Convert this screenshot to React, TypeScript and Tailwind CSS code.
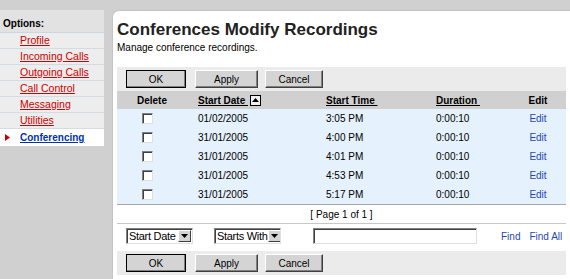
import React from 'react';

const font = "font-['Liberation_Sans',Arial,sans-serif]";

const navItems = ['Profile', 'Incoming Calls', 'Outgoing Calls', 'Call Control', 'Messaging', 'Utilities'];

const rows = [
    { date: '01/02/2005', time: '3:05 PM', duration: '0:00:10' },
    { date: '31/01/2005', time: '4:00 PM', duration: '0:00:10' },
    { date: '31/01/2005', time: '4:01 PM', duration: '0:00:10' },
    { date: '31/01/2005', time: '4:53 PM', duration: '0:00:10' },
    { date: '31/01/2005', time: '5:17 PM', duration: '0:00:10' },
];

const Btn = ({ label, width, primary }: { label: string; width: string; primary?: boolean }) => (
    <div
        className={`${width} h-[18px] flex items-center justify-center text-[10px] text-black bg-[#d4d4d4] border ${
            primary ? 'border-black' : 'border-t-white border-l-white border-r-[#404040] border-b-[#404040]'
        } shadow-[inset_-1px_-1px_0_#808080]`}
    >
        {label}
    </div>
);

const Toolbar = () => (
    <div className="h-[24px] bg-[#ebebeb] flex items-center pl-[9px]">
        <Btn label="OK" width="w-[60px]" primary />
        <div className="ml-[9px]">
            <Btn label="Apply" width="w-[63px]" />
        </div>
        <div className="ml-[7px]">
            <Btn label="Cancel" width="w-[58px]" />
        </div>
    </div>
);

const Checkbox = () => (
    <div className="w-[11px] h-[11px] bg-white border border-t-[#808080] border-l-[#808080] border-r-[#e0e0e0] border-b-[#e0e0e0] shadow-[inset_1px_1px_0_#404040]" />
);

const Select = ({ label }: { label: string }) => (
    <div className="w-[67px] h-[16px] bg-white border border-t-[#808080] border-l-[#808080] border-r-[#e0e0e0] border-b-[#e0e0e0] shadow-[inset_1px_1px_0_#404040] flex items-center justify-between pl-[2px] pr-[1px] overflow-hidden">
        <span className="text-[11px] tracking-[-0.3px] text-black leading-none whitespace-nowrap">{label}</span>
        <div className="shrink-0 w-[13px] h-[12px] bg-[#d4d4d4] border border-t-white border-l-white border-r-[#404040] border-b-[#404040] flex items-center justify-center">
            <svg width="7" height="4" viewBox="0 0 7 4">
                <path d="M0 0h7L3.5 4z" fill="#000" />
            </svg>
        </div>
    </div>
);

export default function App() {
    return (
        <div className={`${font} w-[570px] h-[279px] bg-[#d0d0d0] flex pt-[10px] overflow-hidden`}>
            {/* sidebar */}
            <div className="w-[104px] flex flex-col self-start">
                <div className="h-[23px] bg-[#e2e2e2] flex items-end pb-[3px] pl-[3px] text-[10px] leading-none font-bold text-black border-b border-[#c9d6e3]">
                    Options:
                </div>
                {navItems.map((item) => (
                    <div key={item} className="h-[16px] bg-[#ededed] border-b border-[#d4dbe3] flex items-center pl-[20px]">
                        <span className="text-[10.5px] text-[#cc0000] underline decoration-[#cc0000]">{item}</span>
                    </div>
                ))}
                <div className="h-[17px] bg-white flex items-center pl-[5px]">
                    <svg width="5" height="7" viewBox="0 0 5 7" className="mr-[10px]">
                        <path d="M0 0l5 3.5L0 7z" fill="#cc0000" />
                    </svg>
                    <span className="text-[10px] font-bold text-[#0033aa] underline">Conferencing</span>
                </div>
            </div>

            {/* main panel */}
            <div className="ml-[8px] flex-1 bg-white rounded-tl-[7px] border-l border-t border-[#c4c4c4] pl-[4px] pr-[4px] pt-[9px]">
                <h1 className="text-[17px] leading-[20px] font-bold text-[#222]">Conferences Modify Recordings</h1>
                <p className="text-[10px] leading-[12px] text-black mt-[2px]">Manage conference recordings.</p>

                <div className="mt-[13px]">
                    <Toolbar />
                </div>

                <div className="grid grid-cols-[70px_139px_110px_1fr_56px] text-[10px] text-black">
                    <div className="h-[18px] bg-[#d0d0d0] flex items-center justify-center font-bold">Delete</div>
                    <div className="h-[18px] bg-[#d0d0d0] flex items-center pl-[11px] font-bold">
                        <span className="underline">Start Date&nbsp;</span>
                        <div className="w-[11px] h-[11px] bg-[#f0f0f0] border border-black flex items-center justify-center ml-[2px]">
                            <svg width="7" height="4" viewBox="0 0 7 4">
                                <path d="M3.5 0L7 4H0z" fill="#000" />
                            </svg>
                        </div>
                    </div>
                    <div className="h-[18px] bg-[#d0d0d0] flex items-center font-bold">
                        <span className="underline">Start Time&nbsp;</span>
                    </div>
                    <div className="h-[18px] bg-[#d0d0d0] flex items-center font-bold">
                        <span className="underline">Duration&nbsp;</span>
                    </div>
                    <div className="h-[18px] bg-[#d0d0d0] flex items-center justify-center font-bold">Edit</div>

                    {rows.map((r, i) => (
                        <React.Fragment key={i}>
                            <div className="h-[19px] bg-[#e5f1fc] flex items-center pl-[25px]">
                                <Checkbox />
                            </div>
                            <div className="h-[19px] bg-[#e5f1fc] flex items-center pl-[11px]">{r.date}</div>
                            <div className="h-[19px] bg-[#e5f1fc] flex items-center">{r.time}</div>
                            <div className="h-[19px] bg-[#e5f1fc] flex items-center">{r.duration}</div>
                            <div className="h-[19px] bg-[#e5f1fc] flex items-center justify-center text-[#1f47b8]">Edit</div>
                        </React.Fragment>
                    ))}
                </div>

                <div className="border-t border-[#a8a8a8] h-[19px] flex items-center justify-center text-[10px] text-black">
                    [ Page 1 of 1 ]
                </div>
                <div className="border-t border-[#c8c8c8] h-[25px] flex items-center pl-[9px] text-[10px]">
                    <Select label="Start Date" />
                    <div className="ml-[21px]">
                        <Select label="Starts With" />
                    </div>
                    <div className="ml-[32px] w-[164px] h-[16px] bg-white border border-t-[#808080] border-l-[#808080] border-r-[#e0e0e0] border-b-[#e0e0e0] shadow-[inset_1px_1px_0_#404040]" />
                    <span className="ml-[24px] text-[#1f47b8]">Find</span>
                    <span className="ml-[9px] text-[#1f47b8]">Find All</span>
                </div>

                <div className="mt-[3px]">
                    <Toolbar />
                </div>
            </div>
        </div>
    );
}
